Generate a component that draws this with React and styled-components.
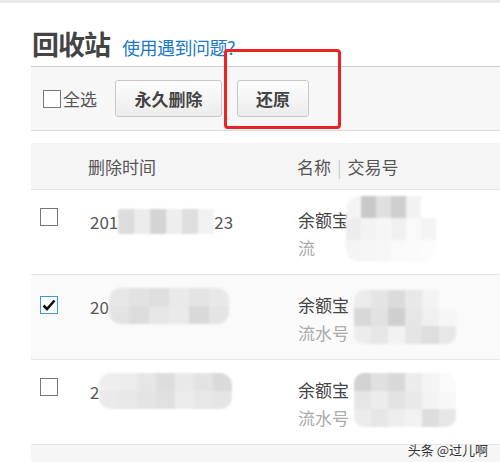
import styled, { createGlobalStyle } from 'styled-components';

const Global = createGlobalStyle`
    html, body {
        margin: 0;
        padding: 0;
        background: #fff;
        overflow: hidden;
    }
    body {
        font-family: "Noto Sans CJK SC", "Noto Sans", sans-serif;
        color: #555;
    }
`;

const Page = styled.div`
    position: relative;
    width: 500px;
    height: 462px;
    overflow: hidden;
    border-top: 3px solid #e9e9e9;
    box-sizing: border-box;
`;

const Main = styled.div`
    margin-left: 31px;
    width: 500px;
`;

const TitleRow = styled.div`
    display: flex;
    align-items: baseline;
    gap: 12px;
    height: 63px;
    padding-left: 1px;
    box-sizing: border-box;
    padding-top: 23px;
`;

const Title = styled.h1`
    margin: 0;
    font-size: 27px;
    font-weight: 700;
    color: #444;
    line-height: 36px;
    letter-spacing: -1px;
`;

const HelpLink = styled.a`
    font-size: 18px;
    color: #1a78c8;
    text-decoration: none;
    letter-spacing: -0.5px;
`;

const Toolbar = styled.div`
    position: relative;
    display: flex;
    align-items: center;
    height: 63px;
    padding-left: 12px;
    background: #f7f7f7;
    border-top: 1px solid #cfcfcf;
    border-bottom: 1px solid #dcdcdc;
`;

const Box = styled.span`
    display: inline-flex;
    align-items: center;
    justify-content: center;
    width: 18px;
    height: 18px;
    box-sizing: border-box;
    background: #fff;
    border: 1px solid ${p => (p.checked ? '#3c98d6' : '#777')};
    flex: none;
`;

const SelectAll = styled.label`
    display: flex;
    align-items: center;
    gap: 2px;
    font-size: 17px;
    color: #555;
    margin-right: 18px;
`;

const Button = styled.button`
    height: 37px;
    width: ${p => p.w}px;
    margin-right: 15px;
    border: 1px solid #c8c8c8;
    border-radius: 3px;
    background: linear-gradient(#fdfdfd, #ececec);
    font-family: "Noto Sans CJK SC", sans-serif;
    font-size: 17px;
    font-weight: 700;
    color: #444;
    padding: 0;
`;

const Highlight = styled.div`
    position: absolute;
    left: 193px;
    top: -18px;
    width: 117px;
    height: 80px;
    box-sizing: border-box;
    border: 3px solid #ec2323;
    border-radius: 4px;
`;

const Table = styled.div`
    margin-top: 12px;
`;

const HeadRow = styled.div`
    display: grid;
    grid-template-columns: 57px 209px 1fr;
    align-items: center;
    height: 46px;
    background: #f5f5f5;
    border-bottom: 1px solid #e2e2e2;
    font-size: 17px;
    color: #555;
`;

const Divider = styled.span`
    color: #ccc;
    margin: 0 6px;
`;

const Row = styled.div`
    display: grid;
    grid-template-columns: 49px 209px 1fr;
    align-items: start;
    height: 85px;
    padding-left: 9px;
    box-sizing: border-box;
    background: ${p => (p.active ? '#fafafa' : '#fff')};
    border-bottom: 1px solid #e6e6e6;
`;

const BoxCell = styled.div`
    padding-top: 17px;
`;

const DateCell = styled.div`
    display: flex;
    align-items: center;
    padding-top: 16px;
    padding-left: 1px;
    font-size: 17px;
    color: #555;
    height: 30px;
`;

const NameCell = styled.div`
    position: relative;
    padding-top: 16px;
    font-size: 17px;
    line-height: 28px;
`;

const Name = styled.div`
    color: #444;
`;

const Serial = styled.div`
    color: #aaa;
`;

const Mosaic = styled.div`
    display: inline-grid;
    grid-template-columns: repeat(${p => p.cols}, ${p => p.cw}px);
    grid-auto-rows: ${p => p.ch}px;
    border-radius: ${p => p.r}px;
    overflow: hidden;
    filter: blur(0.8px);
    flex: none;
`;

const Overlay = styled.div`
    position: absolute;
    left: ${p => p.x}px;
    top: ${p => p.y}px;
`;

const Cell = styled.span`
    background: ${p => p.c};
`;

const Footer = styled.div`
    height: 20px;
    background: #f6f6f6;
`;

const Watermark = styled.div`
    position: absolute;
    right: 12px;
    bottom: 3px;
    font-size: 13px;
    color: #333;
    text-shadow: 0 0 2px #fff;
`;

function Check({ checked }) {
    return (
        <Box checked={checked}>
            {checked && (
                <svg width="14" height="12" viewBox="0 0 14 12">
                    <path d="M1.5 6.5 L5 10 L12.5 1.5" fill="none" stroke="#111" strokeWidth="2.6" />
                </svg>
            )}
        </Box>
    );
}

function Blur({ shades, cols, cw, ch, r = 4 }) {
    return (
        <Mosaic cols={cols} cw={cw} ch={ch} r={r}>
            {shades.map((c, i) => <Cell key={i} c={c} />)}
        </Mosaic>
    );
}

const ROWS = [
    {
        checked: false,
        head: '201',
        tail: '23',
        date: { cols: 6, cw: 16, ch: 25, r: 2, shades: ['#dcdcdc', '#ececec', '#d4d4d4', '#eeeeee', '#dedede', '#f2f2f2'] },
        name: { x: 48, y: 6, cols: 6, cw: 15, ch: 22, r: 14, shades: ['#f4f4f4', '#c9c9c9', '#e0e0e0', '#cfcfcf', '#f2f2f2', '#fff', '#ededed', '#f3f3f3', '#f6f6f6', '#f0f0f0', '#fafafa', '#f4f4f4', '#f4f4f4', '#f6f6f6', '#f7f7f7', '#fafafa', '#fbfbfb', '#fcfcfc'] },
        serial: '流'
    },
    {
        checked: true,
        head: '20',
        date: { cols: 6, cw: 20, ch: 18, r: 12, shades: ['#e6e6e6', '#e2e2e2', '#dedede', '#e9e9e9', '#e4e4e4', '#e8e8e8', '#e3e3e3', '#dcdcdc', '#e6e6e6', '#eaeaea', '#d9d9d9', '#e4e4e4'] },
        name: { x: 56, y: 12, cols: 6, cw: 17, ch: 18, r: 10, shades: ['#ececec', '#e4e4e4', '#dbdbdb', '#e8e8e8', '#f3f3f3', '#fafafa', '#d8d8d8', '#e2e2e2', '#cfcfcf', '#e6e6e6', '#f0f0f0', '#f6f6f6', '#ececec', '#e6e6e6', '#f2f2f2', '#e5e5e5', '#dedede', '#e8e8e8'] },
        serial: '流水号'
    },
    {
        checked: false,
        head: '2',
        date: { cols: 7, cw: 19, ch: 18, r: 12, shades: ['#eeeeee', '#ededed', '#e6e6e6', '#dddddd', '#e9e9e9', '#e3e3e3', '#dadada', '#eaeaea', '#e8e8e8', '#e4e4e4', '#e0e0e0', '#ebebeb', '#e7e7e7', '#e5e5e5'] },
        name: { x: 56, y: 10, cols: 6, cw: 17, ch: 18, r: 10, shades: ['#d2d2d2', '#e0e0e0', '#d8d8d8', '#ececec', '#f4f4f4', '#fafafa', '#e6e6e6', '#ececec', '#e3e3e3', '#e9e9e9', '#f3f3f3', '#f8f8f8', '#ececec', '#e6e6e6', '#eeeeee', '#f2f2f2', '#dddddd', '#e6e6e6'] },
        serial: '流水号'
    }
];

function App() {
    return (
        <Page>
            <Global />
            <Main>
                <TitleRow>
                    <Title>回收站</Title>
                    <HelpLink href="#">使用遇到问题?</HelpLink>
                </TitleRow>
                <Toolbar>
                    <SelectAll>
                        <Check />
                        全选
                    </SelectAll>
                    <Button w={107}>永久删除</Button>
                    <Button w={72}>还原</Button>
                    <Highlight />
                </Toolbar>
                <Table>
                    <HeadRow>
                        <span />
                        <span>删除时间</span>
                        <span>
                            名称<Divider>|</Divider>交易号
                        </span>
                    </HeadRow>
                    {ROWS.map((row, i) => (
                        <Row key={i} active={row.checked}>
                            <BoxCell>
                                <Check checked={row.checked} />
                            </BoxCell>
                            <DateCell>
                                {row.head}
                                <Blur {...row.date} />
                                {row.tail}
                            </DateCell>
                            <NameCell>
                                <Name>余额宝</Name>
                                <Serial>{row.serial}</Serial>
                                <Overlay x={row.name.x} y={row.name.y}>
                                    <Blur {...row.name} />
                                </Overlay>
                            </NameCell>
                        </Row>
                    ))}
                </Table>
                <Footer />
            </Main>
            <Watermark>头条 @过儿啊</Watermark>
        </Page>
    );
}

export default App;
